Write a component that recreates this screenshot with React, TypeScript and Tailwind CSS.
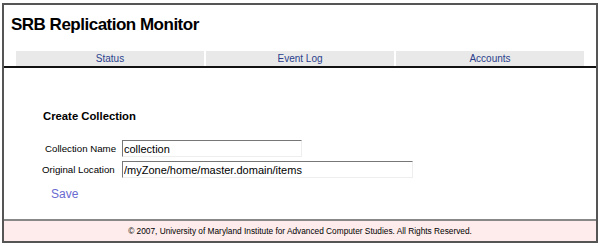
import React from "react";

export default function App() {
  return (
    <div className="w-[600px] h-[246px] bg-white pt-[3px] px-[2px]" style={{ fontFamily: '"Liberation Sans", Arial, sans-serif' }}>
      <div className="h-[240px] border-2 border-[#555] flex flex-col">
        <div className="h-[61px] flex flex-col">
          <h1 className="text-[17px] font-bold text-black leading-none pl-[7px] pt-[11px] tracking-[-0.5px]">SRB Replication Monitor</h1>
          <div className="mt-auto mb-0 flex gap-[2px] pl-[12px] pr-[12px] h-[15px]">
            <a className="flex-1 bg-[#e9e9e9] text-[#2b3f8c] text-[10px] flex items-center justify-center">Status</a>
            <a className="flex-1 bg-[#e9e9e9] text-[#2b3f8c] text-[10px] flex items-center justify-center">Event Log</a>
            <a className="flex-1 bg-[#e9e9e9] text-[#2b3f8c] text-[10px] flex items-center justify-center">Accounts</a>
          </div>
        </div>
        <div className="border-t-2 border-[#111] flex-1 flex flex-col">
          <div className="flex-1 pl-[39px] pt-[43px]">
            <h2 className="text-[11.3px] font-bold text-black leading-none">Create Collection</h2>
            <div className="mt-[18px] flex flex-col gap-[4px]">
              <div className="flex items-center">
                <span className="text-[9.7px] w-[79px] pl-[2px] text-black">Collection Name</span>
                <input className="w-[180px] h-[17px] border border-t-[#777] border-l-[#777] border-b-[#eee] border-r-[#eee] text-[11px] px-[1px] text-black outline-none" defaultValue="collection" />
              </div>
              <div className="flex items-center">
                <span className="text-[9.7px] w-[79px] -ml-[1px] text-black whitespace-nowrap">Original Location</span>
                <input className="w-[291px] h-[17px] ml-[1px] border border-t-[#777] border-l-[#777] border-b-[#eee] border-r-[#eee] text-[11px] px-[1px] text-black outline-none" defaultValue="/myZone/home/master.domain/items" />
              </div>
            </div>
            <a className="block mt-[10px] ml-[8px] text-[12px] text-[#6a6ad0] leading-none">Save</a>
          </div>
          <div className="border-t-2 border-[#888] bg-[#fdeceb] h-[22px] flex items-center justify-center text-[8.3px] text-black">
            © 2007, University of Maryland Institute for Advanced Computer Studies. All Rights Reserved.
          </div>
        </div>
      </div>
    </div>
  );
}
